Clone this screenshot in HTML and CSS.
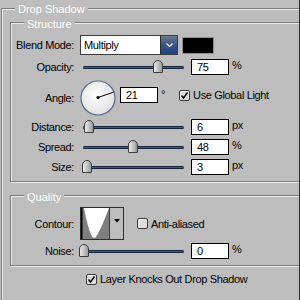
FILE: index.html
```html
<!DOCTYPE html>
<html lang="en">
<head>
    <meta charset="UTF-8">
    <title>Drop Shadow</title>
    <link rel="stylesheet" href="styles.css">
</head>
<body>
    <div class="panel">
        <div class="group outer">
            <span class="group-title">Drop Shadow</span>

            <div class="group structure">
                <span class="group-title">Structure</span>

                <div class="row row-blend">
                    <span class="label">Blend Mode:</span>
                    <div class="select">
                        <span class="select-value">Multiply</span>
                        <span class="select-btn">
                            <svg width="7" height="4" viewBox="0 0 7 4"><path d="M0.5 0.5 L3.5 3.5 L6.5 0.5" fill="none" stroke="#fff" stroke-width="1.3"/></svg>
                        </span>
                    </div>
                    <div class="swatch"></div>
                </div>

                <div class="row">
                    <span class="label">Opacity:</span>
                    <div class="slider"><div class="track"></div><div class="thumb" style="left: 73px"></div></div>
                    <div class="field">75</div>
                    <span class="unit">%</span>
                </div>

                <div class="row row-angle">
                    <span class="label">Angle:</span>
                    <div class="dial">
                        <svg width="36" height="36" viewBox="0 0 36 36">
                            <defs>
                                <radialGradient id="dialFill" cx="45%" cy="40%" r="60%">
                                    <stop offset="0" stop-color="#ffffff"/>
                                    <stop offset="1" stop-color="#e2e2e2"/>
                                </radialGradient>
                            </defs>
                            <circle cx="18" cy="18" r="17" fill="url(#dialFill)" stroke="#5b6a94" stroke-width="1.2"/>
                            <line x1="18" y1="17.5" x2="34" y2="12" stroke="#000" stroke-width="1"/>
                            <circle cx="18" cy="17.5" r="1.6" fill="#000"/>
                        </svg>
                    </div>
                    <div class="field">21</div>
                    <span class="unit unit-deg">&deg;</span>
                    <label class="check">
                        <span class="box"><svg width="9" height="9" viewBox="0 0 9 9"><path d="M1.5 4.5 L3.5 7 L7.5 1.5" fill="none" stroke="#000" stroke-width="1.4"/></svg></span>
                        Use Global Light
                    </label>
                </div>

                <div class="row row-tight">
                    <span class="label">Distance:</span>
                    <div class="slider"><div class="track"></div><div class="thumb" style="left: 4px"></div></div>
                    <div class="field">6</div>
                    <span class="unit">px</span>
                </div>

                <div class="row">
                    <span class="label">Spread:</span>
                    <div class="slider"><div class="track"></div><div class="thumb" style="left: 48px"></div></div>
                    <div class="field">48</div>
                    <span class="unit">%</span>
                </div>

                <div class="row">
                    <span class="label">Size:</span>
                    <div class="slider"><div class="track"></div><div class="thumb" style="left: 2px"></div></div>
                    <div class="field">3</div>
                    <span class="unit">px</span>
                </div>
            </div>

            <div class="group quality">
                <span class="group-title">Quality</span>

                <div class="row row-contour">
                    <span class="label">Contour:</span>
                    <div class="contour">
                        <span class="contour-graph">
                            <svg width="28" height="31" viewBox="0 0 28 31">
                                <rect width="28" height="31" fill="#7f7f7f"/>
                                <path d="M3 0 C6 16, 10 30, 13 30 C16 30, 21 18, 28 0 Z" fill="#fff"/>
                                <rect width="1.5" height="31" fill="#000"/>
                            </svg>
                        </span>
                        <span class="contour-btn">
                            <svg width="6" height="4" viewBox="0 0 6 4"><path d="M0 0 H6 L3 3.5 Z" fill="#000"/></svg>
                        </span>
                    </div>
                    <label class="check check-aa">
                        <span class="box box-empty"></span>
                        Anti-aliased
                    </label>
                </div>

                <div class="row row-noise">
                    <span class="label">Noise:</span>
                    <div class="slider"><div class="track"></div><div class="thumb" style="left: -1px"></div></div>
                    <div class="field">0</div>
                    <span class="unit">%</span>
                </div>
            </div>

            <label class="check knockout">
                <span class="box"><svg width="9" height="9" viewBox="0 0 9 9"><path d="M1.5 4.5 L3.5 7 L7.5 1.5" fill="none" stroke="#000" stroke-width="1.4"/></svg></span>
                Layer Knocks Out Drop Shadow
            </label>
        </div>
    </div>
</body>
</html>
```

FILE: styles.css
```css
:root {
    --panel-bg: #bdbdbd;
    --groove-dark: #7c7c7c;
    --groove-light: #ececec;
    --text-color: #000000;
    --track-blue: #2f5f9c;
    --track-dark: #15233c;
}

* {
    margin: 0;
    padding: 0;
    box-sizing: border-box;
}

body {
    font-family: "Liberation Sans", Arial, sans-serif;
    font-size: 11px;
    letter-spacing: -0.35px;
    color: var(--text-color);
    background: var(--panel-bg);
}

.panel {
    width: 300px;
    height: 300px;
    overflow: hidden;
    border-right: 1px solid #2e2e2e;
    background: var(--panel-bg);
}

/* etched frames */
.group {
    position: relative;
    border: 1px solid var(--groove-dark);
    box-shadow: inset 1px 1px 0 var(--groove-light), 1px 1px 0 var(--groove-light);
}

.group-title {
    position: absolute;
    top: -5px;
    left: 13px;
    padding: 0 3px;
    line-height: 13px;
    letter-spacing: 0;
    color: #fff;
    background: var(--panel-bg);
}

.outer {
    width: 340px;
    height: 320px;
    margin: 8px 0 0 1px;
    padding: 13px 0 0 8px;
}

.outer > .group-title {
    top: -6px;
}

.structure {
    width: 320px;
    padding: 12px 0 6px 0;
}

.quality {
    width: 320px;
    margin-top: 13px;
    padding: 11px 0 6px 0;
}

/* rows */
.row {
    display: flex;
    align-items: center;
    height: 16px;
    margin-top: 4px;
}

.row-blend {
    height: 20px;
    margin-top: 0;
}

.row-angle {
    height: 36px;
    margin-top: 5px;
}

.row-tight {
    margin-top: 3px;
}

.row-contour {
    height: 33px;
    margin-top: 0;
}

.row-noise {
    margin-top: 3px;
}

.label {
    width: 63px;
    margin-right: 6px;
    text-align: right;
    white-space: nowrap;
}

/* blend mode select */
.select {
    display: flex;
    width: 98px;
    height: 20px;
    border: 1px solid #3c3c3c;
    background: #fff;
}

.select-value {
    flex: 1;
    padding-left: 3px;
    line-height: 18px;
}

.select-btn {
    width: 17px;
    display: flex;
    align-items: center;
    justify-content: center;
    background: linear-gradient(to bottom, #707a8c 0%, #3c5684 45%, #1c4286 100%);
    border-left: 1px solid #2c2c2c;
}

.swatch {
    width: 32px;
    height: 17px;
    margin-left: 4px;
    background: #000;
    border: 1px solid #8c8c8c;
}

/* sliders */
.slider {
    position: relative;
    width: 107px;
    height: 16px;
}

.track {
    position: absolute;
    left: 3px;
    right: 3px;
    top: 7px;
    height: 3px;
    border-radius: 2px;
    background: var(--track-blue);
    border-top: 1px solid var(--track-dark);
    border-bottom: 1px solid var(--track-dark);
}

.thumb {
    position: absolute;
    top: 1px;
    width: 10px;
    height: 13px;
    border: 1px solid #3a3a3a;
    border-radius: 5px 5px 1px 1px;
    background: linear-gradient(to right, #e8e8e8 0%, #c4c4c4 50%, #9a9a9a 100%);
}

.field {
    width: 38px;
    height: 16px;
    margin-left: 4px;
    padding-left: 5px;
    line-height: 14px;
    border: 1px solid #000;
    background: #fff;
}

.unit {
    margin-left: 3px;
    align-self: flex-start;
    line-height: 13px;
}

/* angle */
.dial {
    width: 36px;
    height: 36px;
}

.dial svg {
    display: block;
}

.row-angle .field {
    margin-top: -6px;
}

.unit-deg {
    margin-top: 8px;
}

/* checkboxes */
.check {
    display: flex;
    align-items: center;
    gap: 3px;
    white-space: nowrap;
}

.box {
    width: 11px;
    height: 11px;
    display: flex;
    align-items: center;
    justify-content: center;
    border: 1px solid #3a3a3a;
    border-radius: 2px;
    background: #dedede;
    box-shadow: inset 1px 1px 0 #f4f4f4;
}

.row-angle .check {
    margin-left: 14px;
    margin-top: -6px;
}

.check-aa {
    margin-left: 13px;
}

.knockout {
    margin: 7px 0 0 76px;
}

/* contour picker */
.contour {
    display: flex;
    width: 44px;
    height: 33px;
    border: 1px solid #2e2e2e;
    background: #bdbdbd;
}

.contour-graph svg {
    display: block;
}

.contour-btn {
    flex: 1;
    display: flex;
    justify-content: center;
    padding-top: 11px;
    border-left: 1px solid #3a3a3a;
}
```
